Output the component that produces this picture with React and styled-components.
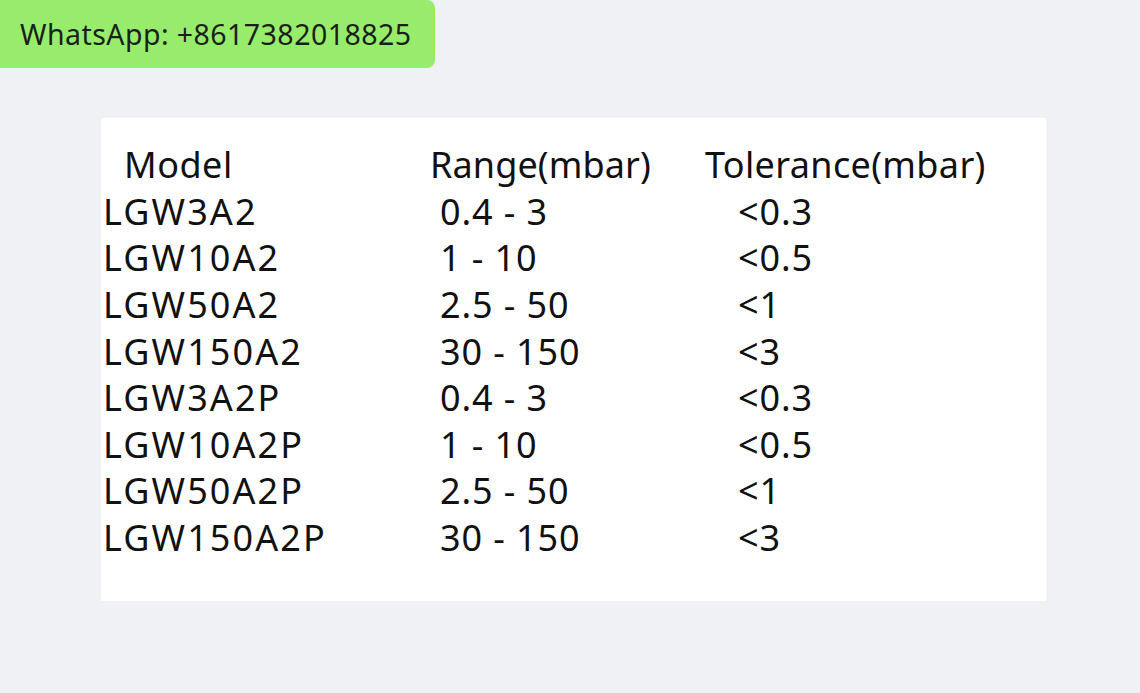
import React from "react";
import styled, { createGlobalStyle } from "styled-components";

const rows = [
  ["LGW3A2", "0.4 - 3", "<0.3"],
  ["LGW10A2", "1 - 10", "<0.5"],
  ["LGW50A2", "2.5 - 50", "<1"],
  ["LGW150A2", "30 - 150", "<3"],
  ["LGW3A2P", "0.4 - 3", "<0.3"],
  ["LGW10A2P", "1 - 10", "<0.5"],
  ["LGW50A2P", "2.5 - 50", "<1"],
  ["LGW150A2P", "30 - 150", "<3"],
];

const GlobalStyle = createGlobalStyle`
  body {
    margin: 0;
    background: #eff1f5;
    font-family: "Noto Sans", "Open Sans", sans-serif;
  }
`;

const Page = styled.div`
  width: 1140px;
  height: 693px;
  display: flex;
  flex-direction: column;
`;

const Badge = styled.div`
  align-self: flex-start;
  width: 435px;
  height: 68px;
  box-sizing: border-box;
  padding-left: 20px;
  display: flex;
  align-items: center;
  background: #97ec6c;
  border-radius: 0 8px 8px 0;
  color: #1a1f18;
  font-size: 28.5px;
  letter-spacing: 0.45px;
  white-space: nowrap;
`;

const Panel = styled.div`
  margin: 50px 0 0 101px;
  width: 945px;
  height: 483px;
  box-sizing: border-box;
  background: #ffffff;
  padding: 24px 0 0 2px;
`;

const Table = styled.div`
  display: grid;
  grid-template-columns: 327px 275px auto;
  grid-auto-rows: 46.6px;
  align-items: center;
  color: #111111;
  font-size: 36px;
  line-height: 1;
`;

const Cell = styled.div`
  padding-left: ${(p) => p.$indent || 0}px;
  letter-spacing: ${(p) => p.$spacing ?? 0.9}px;
  white-space: nowrap;
`;

export default function App() {
  return (
    <>
      <GlobalStyle />
      <Page>
        <Badge>WhatsApp: +8617382018825</Badge>
        <Panel>
          <Table>
            <Cell $indent={21} $spacing={0.5}>Model</Cell>
            <Cell $spacing={0.1}>Range(mbar)</Cell>
            <Cell $spacing={0.35}>Tolerance(mbar)</Cell>
            {rows.map(([model, range, tol]) => (
              <React.Fragment key={model}>
                <Cell $spacing={2.1}>{model}</Cell>
                <Cell $indent={10}>{range}</Cell>
                <Cell $indent={33}>{tol}</Cell>
              </React.Fragment>
            ))}
          </Table>
        </Panel>
      </Page>
    </>
  );
}
